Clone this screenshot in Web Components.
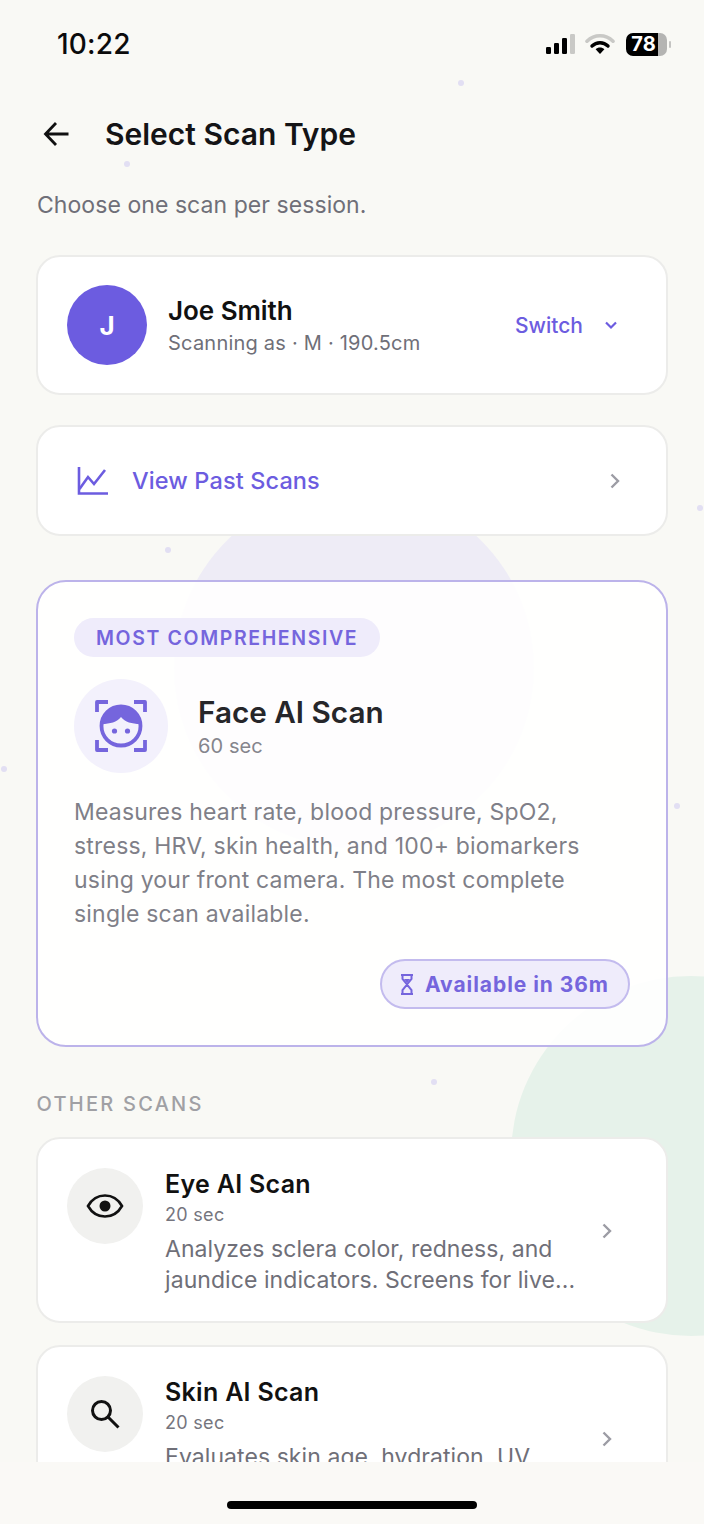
<!DOCTYPE html>
<html><head><meta charset="utf-8"><title>Select Scan Type</title>
<style>
html,body{margin:0;padding:0;width:704px;height:1524px;overflow:hidden;background:#f9f9f5}
body{font-family:Inter,"Liberation Sans",sans-serif}
</style></head><body>
<template id="t-screen"><style>
:host{display:flex;flex-direction:column;position:relative;width:704px;height:1524px;overflow:hidden;background:#f9f9f5}
.blob{position:absolute;border-radius:50%}
.b1{left:174px;top:488px;width:360px;height:360px;background:#eeecf6}
.b2{left:511px;top:976px;width:360px;height:360px;background:#e6f2ea}
.dot{position:absolute;width:6px;height:6px;border-radius:50%;background:#e2dff3}
.scroll{position:relative;flex:none;height:1462px;overflow:hidden;display:flex;flex-direction:column}
.foot{position:relative;flex:1;background:#faf9f6;display:flex;justify-content:center}
.ind{width:250px;height:8px;border-radius:4px;background:#000;margin-top:39px}
</style>
<div class="blob b1"></div><div class="blob b2"></div>
<i class="dot" style="left:458px;top:80px"></i><i class="dot" style="left:124px;top:161px"></i><i class="dot" style="left:165px;top:547px"></i><i class="dot" style="left:697px;top:505px"></i><i class="dot" style="left:1px;top:766px"></i><i class="dot" style="left:674px;top:803px"></i><i class="dot" style="left:431px;top:1079px"></i>
<div class="scroll"><slot></slot></div>
<div class="foot"><div class="ind"></div></div>
</template>

<template id="t-status"><style>
:host{display:flex;flex:none;align-items:center;justify-content:space-between;height:88px;padding:0 37px 0 57px;box-sizing:border-box;color:#0b0b0c}
.t{font-size:28px;font-weight:500;letter-spacing:.2px}
.r{display:flex;align-items:center}
.bat{position:relative;margin-left:11px;width:41px;height:23px;border-radius:7px;background:linear-gradient(90deg,#000 0 78%,#b4b4b2 78%);display:flex;align-items:center;justify-content:center;font-size:20px;font-weight:700;color:#fff;padding-right:6px;box-sizing:border-box;line-height:1}
.bat:after{content:"";position:absolute;right:-4px;top:8px;width:2px;height:7px;border-radius:1px;background:#c4c4c2}
svg{display:block}
.w{margin-left:8px}
</style>
<span class="t">10:22</span>
<div class="r">
<svg width="32" height="22" viewBox="0 0 32 22"><rect x="1" y="14" width="5" height="7" rx="1.2" fill="#000"/><rect x="9" y="10" width="5" height="11" rx="1.2" fill="#000"/><rect x="17" y="5" width="5" height="16" rx="1.2" fill="#000"/><rect x="25" y="1" width="5" height="20" rx="1.2" fill="#c9c9c6"/></svg>
<svg class="w" width="30" height="22" viewBox="0 0 30 22"><path d="M2 8.2C9.5 1 20.5 1 28 8.2" fill="none" stroke="#c9c9c6" stroke-width="3.6" stroke-linecap="round"/><path d="M7 13C11.5 8.6 18.5 8.6 23 13" fill="none" stroke="#000" stroke-width="3.4" stroke-linecap="round"/><path d="M10.6 16.2C13 14 17 14 19.4 16.2L15 21Z" fill="#000"/></svg>
<div class="bat">78</div>
</div></template>

<template id="t-header"><style>
:host{display:block;flex:none;padding:0 37px}
.top{display:flex;align-items:center;height:52px;margin-top:20px;padding-left:6px;gap:36px}
h1{margin:0;font-size:30px;font-weight:600;color:#141416;letter-spacing:0}
p{margin:31px 0 0;font-size:23px;line-height:28px;color:#6f6f78;letter-spacing:.06px}
svg{display:block;flex:none}
</style>
<div class="top"><svg width="26" height="26" viewBox="0 0 26 26" fill="none" stroke="#111" stroke-width="2.8"><path d="M25.5 13H2.5M13 2L2.5 13 13 24"/></svg><h1><slot name="title"></slot></h1></div>
<p><slot name="sub"></slot></p>
</template>

<template id="t-card"><style>
:host{display:block;flex:none;margin:0 36px;box-sizing:border-box;background:#fff;border:2px solid #ececea;border-radius:24px;position:relative}
</style><slot></slot></template>

<template id="t-profile"><style>
:host{display:flex;align-items:center;height:136px;padding:0 48px 0 29px}
.av{width:80px;height:80px;border-radius:50%;background:#6c5ce0;color:#fff;font-size:26px;font-weight:700;display:flex;align-items:center;justify-content:center;flex:none}
.tx{margin-left:21px;flex:1}
.n{font-size:26px;font-weight:600;color:#111;line-height:32px;letter-spacing:-.05px}
.s{font-size:20px;color:#6f6f78;line-height:26px;margin-top:3px;letter-spacing:.22px}
.sw{font-size:21px;font-weight:500;color:#6c5ce0;letter-spacing:0}
svg{display:block;margin-left:21px}
</style>
<div class="av">J</div>
<div class="tx"><div class="n">Joe Smith</div><div class="s">Scanning as · M · 190.5cm</div></div>
<span class="sw">Switch</span>
<svg width="14" height="10" viewBox="0 0 14 10" fill="none" stroke="#6c5ce0" stroke-width="2.2"><path d="M2 2.5l5 5 5-5"/></svg>
</template>

<template id="t-past"><style>
:host{display:flex;align-items:center;height:107px;padding:0 45px 0 39px}
.l{margin-left:24px;flex:1;font-size:23.5px;font-weight:500;color:#6c5ce0;letter-spacing:.12px}
svg{display:block;flex:none}
</style>
<svg width="31" height="28" viewBox="0 0 31 28" fill="none" stroke="#6c5ce0" stroke-width="2.6"><path d="M2 0v26.5h29"/><path d="M2.5 22L11 10l6 7L28 3"/></svg>
<span class="l">View Past Scans</span>
<svg width="12" height="18" viewBox="0 0 12 18" fill="none" stroke="#9c9ca4" stroke-width="2.4"><path d="M2.5 2.500L9 9l-6.500 6.500"/></svg>
</template>

<template id="t-feat"><style>
:host{display:block;flex:none;margin:0 36px;box-sizing:border-box;height:467px;background:rgba(255,255,255,.9);border:2px solid #bcb3ea;border-radius:30px;padding:36px 36px 0;position:relative}
.tag{display:inline-flex;align-items:center;height:39px;padding:0 22px;border-radius:20px;background:#efecfb;color:#7565dd;font-size:19.5px;font-weight:600;letter-spacing:1.62px}
.row{display:flex;align-items:center;margin-top:22px}
.ic{width:94px;height:94px;border-radius:50%;background:#f3f1fc;display:flex;align-items:center;justify-content:center;flex:none}
.tx{margin-left:30px}
.n{font-size:29.700px;font-weight:600;color:#26262a;line-height:36px}
.s{font-size:20px;color:#85858d;line-height:24px;margin-top:4px;letter-spacing:.1px}
p{margin:22px 0 0;font-size:23px;line-height:34px;color:#7f7f88;letter-spacing:.2px}
.foot{display:flex;justify-content:flex-end;margin-top:28px}
.pill{display:inline-flex;align-items:center;gap:11px;height:50px;box-sizing:border-box;padding:0 19px 0 18px;border:2px solid #c3bbee;border-radius:25px;background:#efecfb;color:#7565dd;font-size:21px;font-weight:700;letter-spacing:.95px}
svg{display:block}
</style>
<div class="tag">MOST COMPREHENSIVE</div>
<div class="row"><div class="ic">
<svg width="52" height="52" viewBox="0 0 52 52" fill="none"><g stroke="#7565dd" stroke-width="3.800" stroke-linejoin="round"><path d="M2 12V2h11M39 2h11v10M2 40v10h11M39 50h11V40"/><circle cx="26" cy="26" r="19.500"/></g><path d="M7 24C8 13 16 6.500 26 6.500S44 13 45 24C37 24 30 22 26 17 22 22 15 24 7 24Z" fill="#7565dd"/><circle cx="19.500" cy="31" r="2.600" fill="#7565dd"/><circle cx="32.500" cy="31" r="2.600" fill="#7565dd"/></svg>
</div><div class="tx"><div class="n">Face AI Scan</div><div class="s">60 sec</div></div></div>
<p>Measures heart rate, blood pressure, SpO2,<br>stress, HRV, skin health, and 100+ biomarkers<br>using your front camera. The most complete<br>single scan available.</p>
<div class="foot"><div class="pill"><svg width="14" height="21" viewBox="0 0 14 21" fill="none" stroke="#7565dd" stroke-width="2"><path d="M1 1h12M1 20h12M2.500 1v4L7 10.500 11.500 5V1M2.500 20v-4L7 10.500 11.500 16v4"/><path d="M4 5h6l-3 4z" fill="#7565dd" stroke="none"/></svg>Available in 36m</div></div>
</template>

<template id="t-scan"><style>
:host{display:flex;align-items:flex-start;margin:0 36px;flex:none;box-sizing:border-box;background:#fff;border:2px solid #ececea;border-radius:24px;height:186px;padding:29px 53px 0 29px}
:host([clip]){height:240px;margin-top:22px}
.ic{width:76px;height:76px;border-radius:50%;background:#f1f1ef;display:flex;align-items:center;justify-content:center;flex:none}
.tx{margin-left:22px;flex:1;min-width:0;padding-top:1px}
.n{font-size:25px;font-weight:600;color:#111;line-height:30px;letter-spacing:.3px}
.s{font-size:18px;color:#75757e;line-height:22px;margin-top:5px;letter-spacing:.3px}
.d{font-size:23px;line-height:31px;color:#6f6f78;margin-top:8px;letter-spacing:.07px}
.ch{display:block;flex:none;margin-left:18px;margin-top:54px}
</style>
<div class="ic"><slot name="icon"></slot></div>
<div class="tx"><div class="n"><slot name="name"></slot></div><div class="s"><slot name="time"></slot></div><div class="d"><slot name="desc"></slot></div></div>
<svg class="ch" width="12" height="18" viewBox="0 0 12 18" fill="none" stroke="#9c9ca4" stroke-width="2.4"><path d="M2.500 2.500L9 9l-6.500 6.500"/></svg>
</template>

<template id="t-label"><style>
:host{display:block;flex:none;margin:45px 36px 21px 36.500px;font-size:20px;line-height:24px;font-weight:500;color:#a0a0a4;letter-spacing:2.25px}
</style><slot></slot></template>

<scan-screen>
 <status-bar></status-bar>
 <scan-header><span slot="title">Select Scan Type</span><span slot="sub">Choose one scan per session.</span></scan-header>
 <scan-card style="margin-top:36px"><profile-row></profile-row></scan-card>
 <scan-card style="margin-top:30px"><past-row></past-row></scan-card>
 <feature-card style="margin-top:44px"></feature-card>
 <section-label>OTHER SCANS</section-label>
 <scan-item>
  <svg slot="icon" width="38" height="26" viewBox="0 0 38 26" fill="none"><path d="M2 13C6 6 12 2.500 19 2.500S32 6 36 13c-4 7-10 10.500-17 10.500S6 20 2 13Z" stroke="#111" stroke-width="2.600"/><circle cx="19" cy="13" r="5.500" fill="#111"/></svg>
  <span slot="name">Eye AI Scan</span><span slot="time">20 sec</span>
  <span slot="desc">Analyzes sclera color, redness, and<br>jaundice indicators. Screens for live...</span>
 </scan-item>
 <scan-item clip>
  <svg slot="icon" width="30" height="30" viewBox="0 0 30 30" fill="none" stroke="#111" stroke-width="3"><circle cx="11.500" cy="11.500" r="9"/><path d="M18 18l10.500 10.500"/></svg>
  <span slot="name">Skin AI Scan</span><span slot="time">20 sec</span>
  <span slot="desc">Evaluates skin age, hydration, UV<br>damage and overall skin condition.</span>
 </scan-item>
</scan-screen>
<script>
function reg(tag,id){customElements.define(tag,class extends HTMLElement{constructor(){super();this.attachShadow({mode:'open'}).appendChild(document.getElementById(id).content.cloneNode(true));}});}
reg('scan-screen','t-screen');reg('status-bar','t-status');reg('scan-header','t-header');reg('scan-card','t-card');reg('profile-row','t-profile');reg('past-row','t-past');reg('feature-card','t-feat');reg('scan-item','t-scan');reg('section-label','t-label');
</script>
</body></html>
